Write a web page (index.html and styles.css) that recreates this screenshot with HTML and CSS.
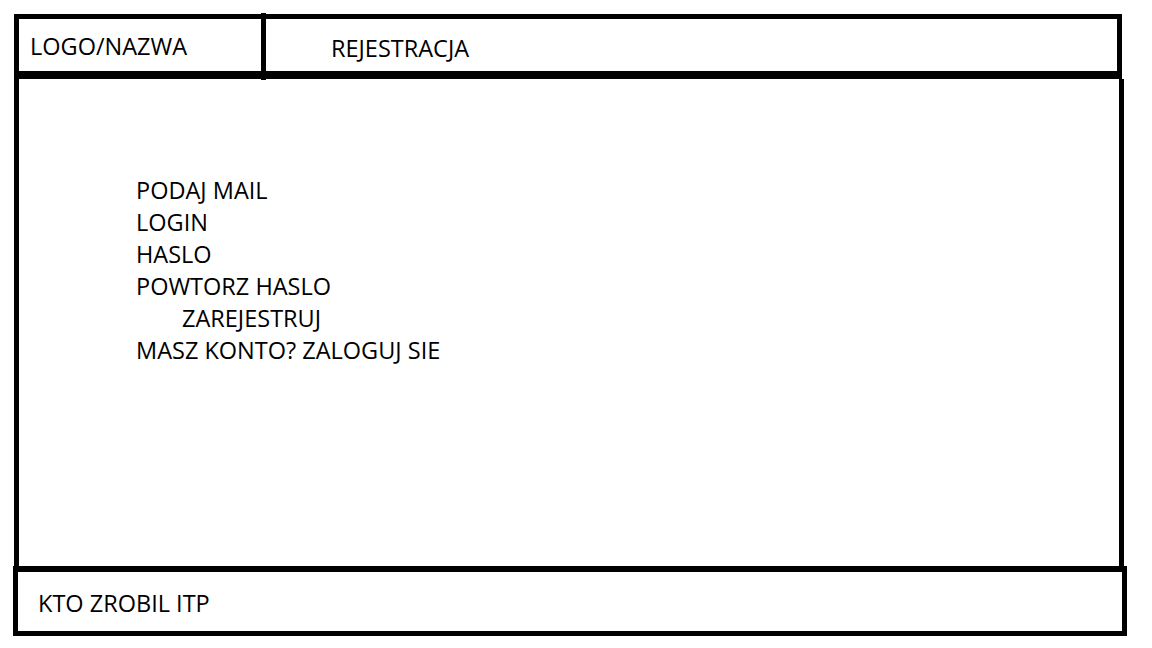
FILE: index.html
```html
<!DOCTYPE html>
<html lang="pl">
<head>
<meta charset="utf-8">
<title>Rejestracja</title>
<link rel="stylesheet" href="styles.css">
</head>
<body>
<div class="page">
  <header class="header">
    <div class="logo">LOGO/NAZWA</div>
    <div class="divider"></div>
    <div class="title">REJESTRACJA</div>
  </header>
  <main class="main">
    <div class="form">
      <div class="line">PODAJ MAIL</div>
      <div class="line">LOGIN</div>
      <div class="line">HASLO</div>
      <div class="line">POWTORZ HASLO</div>
      <div class="line indent">ZAREJESTRUJ</div>
      <div class="line">MASZ KONTO? ZALOGUJ SIE</div>
    </div>
  </main>
  <footer class="footer">KTO ZROBIL ITP</footer>
</div>
</body>
</html>
```
FILE: styles.css
```css
* { box-sizing: border-box; }
html, body { margin: 0; padding: 0; background: #fff; }
body {
  font-family: "Open Sans", "Noto Sans", sans-serif;
  font-size: 23.5px;
  line-height: 32px;
  color: #000;
}
.page {
  padding: 14px 0 0 14px;
}
.header {
  display: flex;
  width: 1108px;
  height: 65px;
  border: 5px solid #000;
  border-bottom-width: 8px;
}
.logo {
  width: 242px;
  padding: 11px 0 0 11px;
}
.divider {
  width: 5px;
  background: #000;
  margin: -6px 0 -9px 0;
}
.title {
  flex: 1;
  padding: 13px 0 0 65px;
}
.main {
  width: 1110px;
  height: 487px;
  border-left: 5px solid #000;
  border-right: 5px solid #000;
}
.form {
  padding: 95px 0 0 117px;
}
.indent { padding-left: 46px; }
.footer {
  margin-left: -1px;
  width: 1114px;
  height: 70px;
  border: 5px solid #000;
  border-top-width: 6px;
  padding: 15px 0 0 20px;
}
```
